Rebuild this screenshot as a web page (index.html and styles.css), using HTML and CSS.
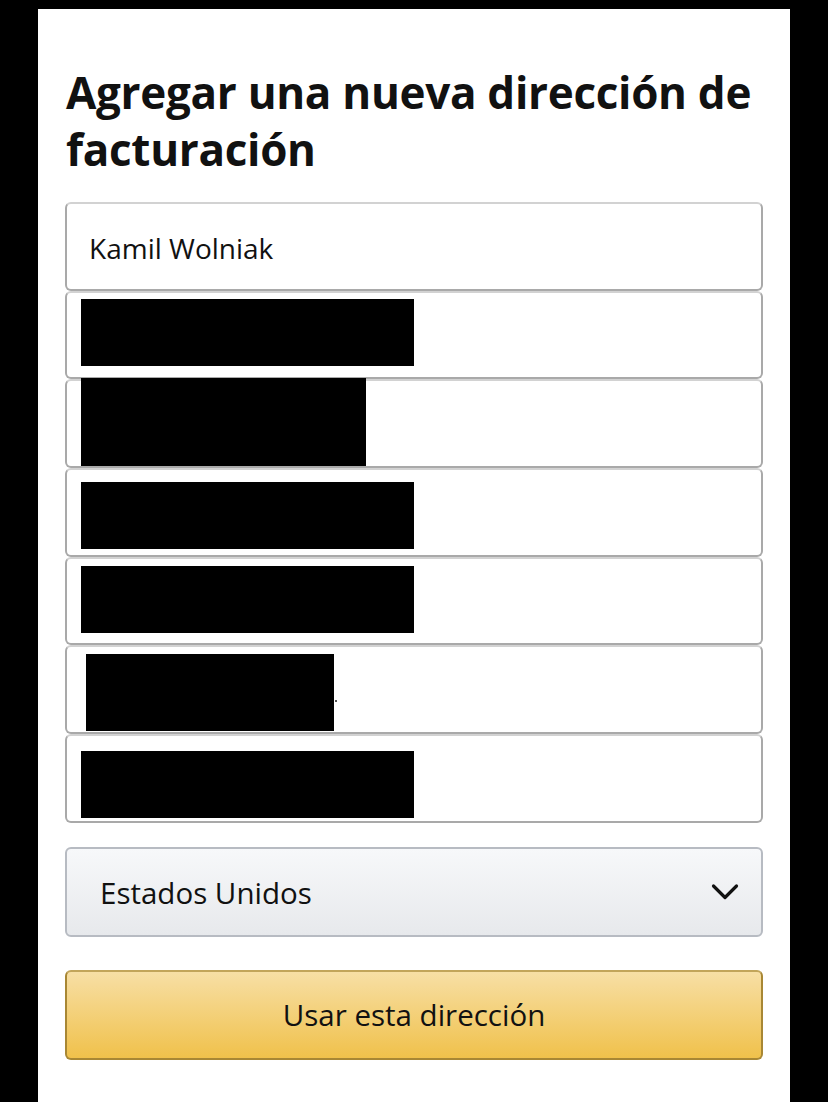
FILE: index.html
```html
<!DOCTYPE html>
<html lang="es">
<head>
<meta charset="utf-8">
<title>Agregar una nueva dirección de facturación</title>
<link rel="stylesheet" href="styles.css">
</head>
<body>
<main class="panel">
  <h1 class="title">Agregar una nueva dirección de facturación</h1>
  <div class="fields">
    <div class="field"><span class="value">Kamil Wolniak</span></div>
    <div class="field"><span class="redact r2"></span></div>
    <div class="field"><span class="redact r3"></span></div>
    <div class="field"><span class="redact r4"></span></div>
    <div class="field"><span class="redact r5"></span></div>
    <div class="field"><span class="redact r6"></span><span class="dot"></span></div>
    <div class="field"><span class="redact r7"></span></div>
  </div>
  <div class="select">
    <span class="select-text">Estados Unidos</span>
    <svg class="chev" width="28" height="18" viewBox="0 0 28 18"><path d="M2.5 3 L14 14.5 L25.5 3" fill="none" stroke="#111" stroke-width="3.2" stroke-linecap="round" stroke-linejoin="round"/></svg>
  </div>
  <button class="primary" type="button">Usar esta dirección</button>
</main>
</body>
</html>
```
FILE: styles.css
```css
html, body {
  margin: 0;
  padding: 0;
  background: #000;
}
body {
  font-family: "Open Sans", "Liberation Sans", sans-serif;
  color: #111;
}
.panel {
  margin: 9px 0 0 38px;
  width: 752px;
  min-height: 1093px;
  box-sizing: border-box;
  background: #fff;
  padding: 55px 27px 0 27px;
}
.title {
  margin: 0 0 24px 1px;
  font-size: 44px;
  line-height: 57px;
  font-weight: 700;
  color: #111;
  letter-spacing: -0.3px;
}
.fields {
  display: flex;
  flex-direction: column;
}
.field {
  position: relative;
  height: 88.7px;
  box-sizing: border-box;
  border: 2px solid #a9a9a9;
  border-top-color: #d2d2d2;
  border-radius: 6px;
  background: #fff;
  display: flex;
  align-items: center;
  padding-left: 22px;
}
.value {
  font-size: 28px;
  color: #111;
  margin-top: 4px;
}
.redact {
  position: absolute;
  background: #000;
  left: 14px;
  width: 333px;
  height: 67px;
}
.r2 { top: 6px; }
.r3 { top: -3px; width: 285px; height: 88px; }
.r4 { top: 12px; }
.r5 { top: 7px; }
.r6 { top: 7px; left: 19px; width: 248px; height: 77px; }
.r7 { top: 15px; }
.dot {
  position: absolute;
  left: 268px;
  top: 53px;
  width: 2px;
  height: 2px;
  background: #555;
}
.select {
  margin-top: 24px;
  height: 90px;
  box-sizing: border-box;
  border: 2px solid #b7bbc2;
  border-radius: 6px;
  background: linear-gradient(to bottom, #f7f8fa, #e7e9ec);
  display: flex;
  align-items: center;
  justify-content: space-between;
  padding: 0 22px 0 33px;
}
.select-text {
  font-size: 29.5px;
  color: #111;
  margin-top: 2px;
}
.chev {
  display: block;
}
.primary {
  display: block;
  width: 100%;
  margin-top: 33px;
  height: 90px;
  box-sizing: border-box;
  border: 2px solid #a88734;
  border-top-color: #c2a55a;
  border-radius: 6px;
  background: linear-gradient(to bottom, #f7dfa5, #f0c14b);
  font-family: "Open Sans", "Liberation Sans", sans-serif;
  font-size: 29.5px;
  color: #111;
  padding: 0;
}
```
